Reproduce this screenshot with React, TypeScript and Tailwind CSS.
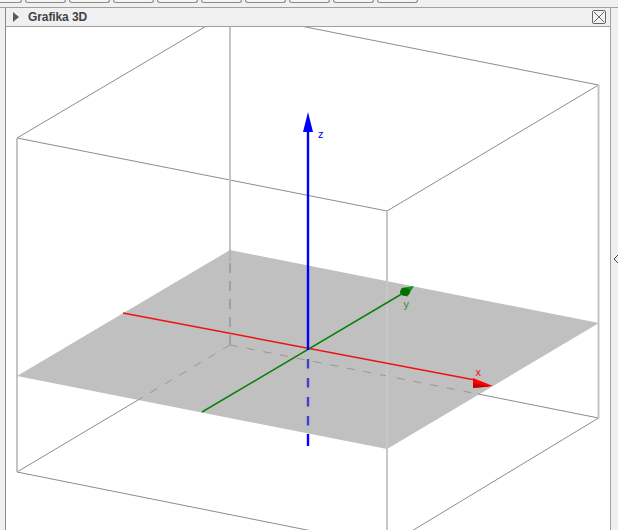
import React from "react"

const toolbarButtons = [25, 69, 113, 157, 201, 245, 289, 333, 377]

const Scene: React.FC = () => (
  <svg className="block w-[604px] h-[503px]" viewBox="6 27 604 503" fill="none">
    {/* back edges of the box */}
    <g stroke="#8c8c8c" strokeWidth="1">
      <path d="M17 138 L230 12 L598.5 85 L387 211 Z" />
      <path d="M17 472 L138 400" />
      <path d="M17 472 L387 546 L598.5 418" />
    </g>

    <polygon points="17,376 230,250 599,323 387,449" fill="#c0c0c0" />

    {/* edges hidden by the floor */}
    <g stroke="#969696" strokeWidth="1" strokeDasharray="8 9">
      <path d="M230 345 L138 400" />
      <path d="M230 345 L478 394" />
    </g>
    <path d="M478 394 L598.5 418" stroke="#8c8c8c" />

    <g stroke="#c4c4c4" strokeWidth="2">
      <path d="M17 138 V472" />
      <path d="M387 211 V530" stroke="#c8c8c8" />
      <path d="M598.5 85 V418" />
      <path d="M230 26 V250" />
    </g>
    <path d="M230 250 V262" stroke="#b4b4b4" strokeWidth="2" />
    <path d="M230 263 V345" stroke="#a0a0a0" strokeWidth="2" strokeDasharray="10 8" />

    {/* axes */}
    <path d="M123 313 L475 380" stroke="#ee1111" strokeWidth="1.5" />
    <polygon points="473,378 493,386 473,388" fill="#ff0000" />
    <polygon points="473,383 490,386.5 473,388" fill="#c40000" />

    <path d="M202 412 L405 292" stroke="#0a800a" strokeWidth="1.5" />
    <polygon points="401,288 414,286 407,297" fill="#0a9a0a" />
    <ellipse cx="405" cy="292" rx="5" ry="4" fill="#056b05" />

    <path d="M308 132 V350" stroke="#0000ff" strokeWidth="2.4" />
    <polygon points="308,112 303,132 313,132" fill="#0000ff" />
    <path d="M308 359 V434" stroke="#4040c8" strokeWidth="2.4" strokeDasharray="9.5 9.5" />
    <path d="M308 434 V446" stroke="#0000ff" strokeWidth="2.4" />

    <g fontFamily="'Liberation Sans', sans-serif" fontSize="11">
      <text x="318" y="138" fill="#0000dd">z</text>
      <text x="403.5" y="308" fill="#3f8a3f">y</text>
      <text x="475.5" y="376" fill="#ee1111">x</text>
    </g>
  </svg>
)

const App: React.FC = () => {
  return (
    <div className="w-[618px] h-[530px] overflow-hidden bg-[#f0f0f0] flex flex-col font-['Liberation_Sans',sans-serif]">
      <div className="flex h-[8px] shrink-0 border-b border-[#a0a0a0] gap-[3px] ml-[-19px]">
        <div className="w-[41px] h-[3px] bg-[#f4f4f4] border border-t-0 border-[#8a8a8a] rounded-b-[3px]" />
        {toolbarButtons.map((x) => (
          <div
            key={x}
            className="w-[41px] h-[3px] bg-[#f4f4f4] border border-t-0 border-[#8a8a8a] rounded-b-[3px]"
          />
        ))}
      </div>

      <div className="flex flex-1 min-h-0">
        <div className="w-[6px] shrink-0 border-r border-[#8c8c8c]" />
        <div className="w-[604px] shrink-0 flex flex-col">
          <div className="h-[19px] shrink-0 flex items-center border-b border-[#a0a0a0] pl-[7px] pr-[4px]">
            <svg className="w-[6px] h-[10px] shrink-0" viewBox="0 0 6 10">
              <polygon points="0,0 6,5 0,10" fill="#5a5a5a" />
            </svg>
            <span className="ml-[9px] text-[12px] tracking-[-0.1px] leading-none font-bold text-[#404448]">
              Grafika 3D
            </span>
            <svg className="ml-auto w-[14px] h-[14px] shrink-0" viewBox="0 0 14 14" fill="none">
              <rect x="0.5" y="0.5" width="13" height="13" rx="1.5" stroke="#666666" fill="#f2f2f2" />
              <path d="M2 2 L12 12 M12 2 L2 12" stroke="#666666" />
            </svg>
          </div>
          <div className="flex-1 min-h-0 bg-white">
            <Scene />
          </div>
        </div>
        <div className="flex-1 border-l border-[#a0a0a0] flex items-center pb-[20px]">
          <svg className="ml-[2px] w-[6px] h-[10px]" viewBox="0 0 6 10" fill="none">
            <path d="M5.5 0.5 L1 5 L5.5 9.5" stroke="#444444" />
          </svg>
        </div>
      </div>
    </div>
  )
}

export default App
